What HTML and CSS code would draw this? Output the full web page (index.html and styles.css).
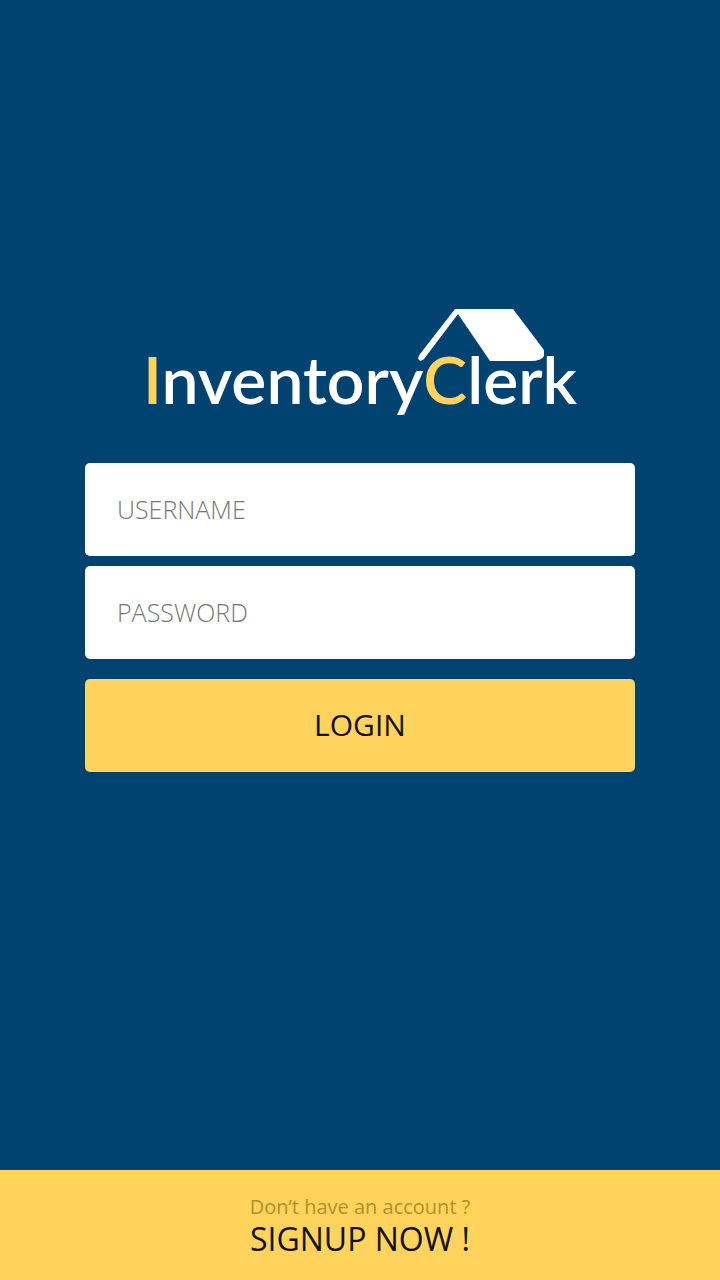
FILE: index.html
```html
<!DOCTYPE html>
<html lang="en">
<head>
<meta charset="utf-8">
<meta name="viewport" content="width=device-width, initial-scale=1">
<title>InventoryClerk</title>
<link rel="stylesheet" href="styles.css">
</head>
<body>
<main class="login">
  <h1 class="brand">
    <svg class="brand-roof" viewBox="0 0 128 54" aria-hidden="true">
      <path d="M37 0H95L126 41V47Q124 52 112 52H72L40 5L6 50Q3 53 1 51Q-1 49 2 45Z"/>
    </svg>
    <span class="brand-name"><span class="accent">I</span>nventory<span class="accent">C</span>lerk</span>
  </h1>
  <form class="form">
    <input class="field" type="text" placeholder="USERNAME" aria-label="Username" autocomplete="username">
    <input class="field" type="password" placeholder="PASSWORD" aria-label="Password" autocomplete="current-password">
    <button class="submit" type="submit">LOGIN</button>
  </form>
</main>
<footer class="signup">
  <p class="question">Don’t have an account ?</p>
  <a class="signup-link" href="#">SIGNUP NOW !</a>
</footer>
</body>
</html>
```
FILE: styles.css
```css
* {
  box-sizing: border-box;
}

body {
  margin: 0;
  min-height: 100vh;
  display: flex;
  flex-direction: column;
  background: #004371;
  font-family: "Open Sans", sans-serif;
}

.login {
  flex: 1;
  display: flex;
  flex-direction: column;
  align-items: center;
  padding: 309px 24px 32px;
}

.brand {
  position: relative;
  margin: 0 0 44px;
  padding-top: 30px;
  color: #fff;
  font-family: Lato, sans-serif;
  font-size: 66px;
  font-weight: 600;
  line-height: 80px;
}

.brand-roof {
  position: absolute;
  top: 0;
  right: 31px;
  width: 128px;
  height: 54px;
  fill: #fff;
}

.brand-name {
  position: relative;
}

.accent {
  color: #ffd35c;
}

.form {
  display: flex;
  flex-direction: column;
  gap: 10px;
  width: 100%;
  max-width: 550px;
}

.field,
.submit {
  width: 100%;
  height: 93px;
  padding: 0 32px 2px;
  border: 0;
  border-radius: 5px;
  font-family: inherit;
}

.field {
  background: #fff;
  color: #333;
  font-size: 25px;
  font-weight: 300;
}

.field::placeholder {
  color: #777;
  opacity: 1;
}

.submit {
  margin-top: 10px;
  background: #ffd35c;
  color: #111;
  font-size: 30px;
}

.signup {
  display: flex;
  flex-direction: column;
  align-items: center;
  padding: 24px 16px 22px;
  background: #ffd35c;
}

.question {
  margin: 0;
  color: #b58e26;
  font-size: 20px;
  line-height: 26px;
}

.signup-link {
  color: #111;
  font-size: 32px;
  line-height: 38px;
  text-decoration: none;
}
```
